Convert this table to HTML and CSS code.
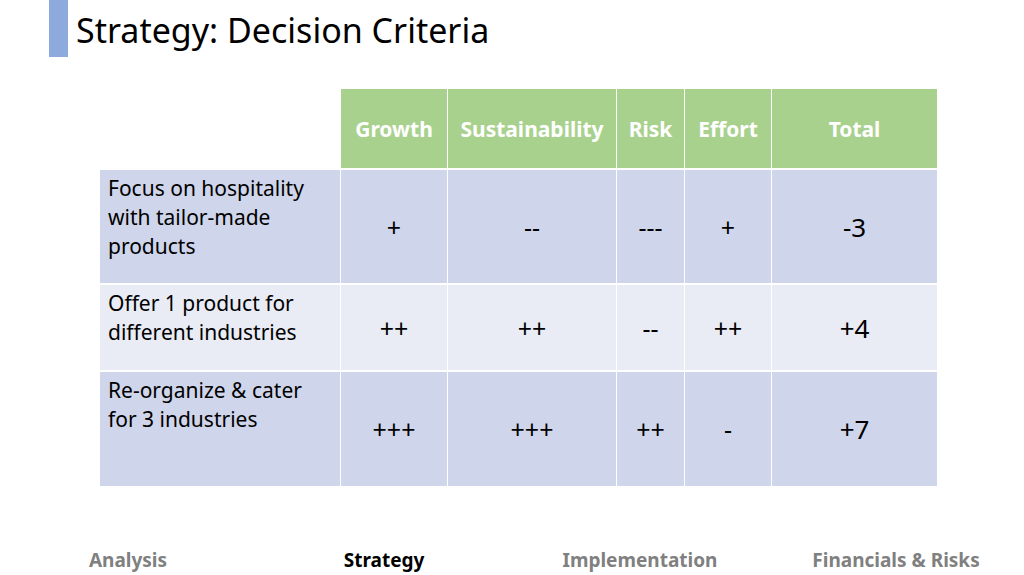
FILE: index.html
```html
<!DOCTYPE html>
<html lang="en">
<head>
<meta charset="utf-8">
<title>Strategy: Decision Criteria</title>
<link rel="stylesheet" href="styles.css">
</head>
<body>
<div class="slide">
  <header class="title-bar">
    <div class="accent"></div>
    <h1 class="title">Strategy: Decision Criteria</h1>
  </header>
  <main class="content">
    <div class="matrix">
      <div class="cell blank"></div>
      <div class="cell head">Growth</div>
      <div class="cell head">Sustainability</div>
      <div class="cell head">Risk</div>
      <div class="cell head">Effort</div>
      <div class="cell head">Total</div>

      <div class="cell label dark">Focus on hospitality with tailor-made products</div>
      <div class="cell val dark">+</div>
      <div class="cell val dark">--</div>
      <div class="cell val dark">---</div>
      <div class="cell val dark">+</div>
      <div class="cell total dark">-3</div>

      <div class="cell label light">Offer 1 product for different industries</div>
      <div class="cell val light">++</div>
      <div class="cell val light">++</div>
      <div class="cell val light">--</div>
      <div class="cell val light">++</div>
      <div class="cell total light">+4</div>

      <div class="cell label dark">Re-organize &amp; cater for 3 industries</div>
      <div class="cell val dark">+++</div>
      <div class="cell val dark">+++</div>
      <div class="cell val dark">++</div>
      <div class="cell val dark">-</div>
      <div class="cell total dark">+7</div>
    </div>
  </main>
  <nav class="footer-nav">
    <span class="nav-item">Analysis</span>
    <span class="nav-item active">Strategy</span>
    <span class="nav-item">Implementation</span>
    <span class="nav-item">Financials &amp; Risks</span>
  </nav>
</div>
</body>
</html>
```

FILE: styles.css
```css
* { box-sizing: border-box; }
html, body { margin: 0; padding: 0; background: #ffffff; }
body { font-family: "Noto Sans", "Open Sans", "DejaVu Sans", sans-serif; color: #000; }
.slide {
  width: 1024px;
  height: 575px;
  display: flex;
  flex-direction: column;
  overflow: hidden;
}
.title-bar {
  display: flex;
  align-items: flex-start;
  height: 57px;
  padding-left: 49px;
}
.accent {
  width: 19px;
  height: 57px;
  background: #8eaadc;
}
.title {
  margin: 0 0 0 8px;
  font-weight: 400;
  font-size: 34px;
  line-height: 1;
  padding-top: 13px;
  letter-spacing: 0;
}
.content {
  padding: 32px 0 0 100px;
}
.matrix {
  display: grid;
  grid-template-columns: 240px 106px 168px 67px 86px 165px;
  grid-template-rows: 79px 113px 85px 114px;
  column-gap: 1px;
  row-gap: 2px;
  width: 837px;
}
.cell {
  display: flex;
  align-items: center;
  justify-content: center;
}
.blank { background: #fff; }
.head {
  background: #a9d18e;
  color: #fff;
  font-weight: 700;
  font-size: 21px;
}
.dark { background: #cfd5ea; }
.light { background: #e9ebf5; }
.label {
  align-items: flex-start;
  justify-content: flex-start;
  padding: 4px 8px 0 8px;
  font-size: 21px;
  line-height: 29px;
}
.val { font-size: 25px; }
.total { font-size: 26px; }
.footer-nav {
  margin-top: auto;
  display: grid;
  grid-template-columns: repeat(4, 1fr);
  height: 28px;
  padding-bottom: 2px;
  font-family: "Noto Sans", "Open Sans", sans-serif;
  font-weight: 700;
  font-size: 19px;
  font-stretch: condensed;
  color: #808080;
  text-align: center;
}
.nav-item.active { color: #000; }
```
